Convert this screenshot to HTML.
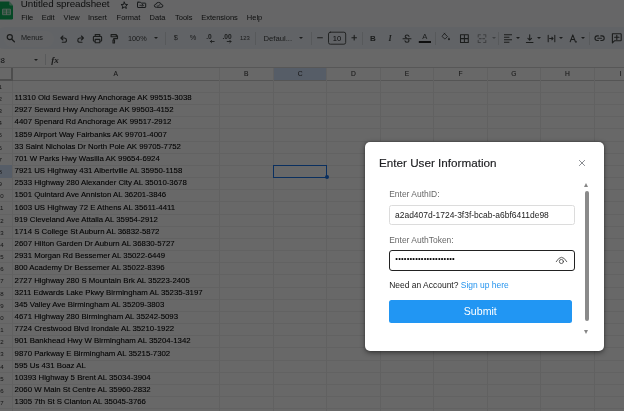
<!DOCTYPE html>
<html><head><meta charset="utf-8"><title>Untitled spreadsheet</title>
<style>
html,body{margin:0;padding:0;background:#fff;}
body{width:624px;height:411px;overflow:hidden;position:relative;font-family:"Liberation Sans",Arial,sans-serif;color:#000;}
#app{position:absolute;left:0;top:0;width:624px;height:411px;overflow:hidden;background:#fff;}
#under{position:absolute;left:0;top:0;width:624px;height:411px;filter:blur(0.35px);}
.abs{position:absolute;}
#head{position:absolute;left:0;top:0;width:624px;height:49px;background:#f9fbfd;}
#tb{position:absolute;left:-6px;top:27.4px;width:640px;height:21.8px;background:#edf2fa;border-radius:11px;}
#menusbox{position:absolute;left:3.5px;top:30.5px;width:50px;height:16px;border-radius:8px;background:#f2f5fb;}
.t{position:absolute;white-space:pre;line-height:1;}
.menu{font-size:7.5px;color:#1f1f1f;top:14.2px;}
.tbt{font-size:7.6px;color:#444746;top:33.6px;}
.sep{position:absolute;top:31.5px;width:1px;height:13px;background:#d6d9df;}
.hl{position:absolute;left:0;width:624px;height:1px;background:#f0f0f0;}
.vl{position:absolute;top:68px;width:1px;height:343px;background:#ededed;}
.cell{position:absolute;left:14.6px;font-size:7.82px;line-height:1;white-space:pre;color:#000;-webkit-text-stroke:0.1px #000;}
.rn{position:absolute;font-size:6.1px;line-height:1;color:#333;width:27px;left:-13.2px;text-align:center;}
.ch{position:absolute;top:71px;font-size:6.7px;line-height:1;color:#3c3c3c;text-align:center;-webkit-text-stroke:0.08px #3c3c3c}
#overlay{position:absolute;left:0;top:0;width:624px;height:411px;background:rgba(0,0,0,0.592);}
#modal{position:absolute;left:365px;top:142.2px;width:239px;height:208.8px;background:#fff;border-radius:5px;box-shadow:0 1.5px 5px rgba(0,0,0,.42), 0 0 2px rgba(0,0,0,.3);}
#mtitle{position:absolute;left:14px;top:14.6px;font-size:11.7px;line-height:1;color:#202124;white-space:pre;-webkit-text-stroke:0.15px #202124;}
.lab{position:absolute;left:24.2px;font-size:8.47px;line-height:1;color:#686868;white-space:pre;}
.mt{filter:blur(0.3px);}
.inp{position:absolute;left:24px;width:185.6px;box-sizing:border-box;border-radius:2.5px;background:#fff;}
</style></head><body>
<div id="app">

<div id="under">
<div id="head"></div>
<svg class="abs" style="left:0;top:0" width="16" height="24" viewBox="0 0 16 24">
<path d="M0 1.6 H9.2 L13 5.4 V18.2 Q13 19.4 11.8 19.4 H0 Z" fill="#11b05c"/>
<path d="M9.2 1.6 L13 5.4 H10 Q9.2 5.4 9.2 4.6 Z" fill="#8fd9b4"/>
<path d="M2.6 9.2 H10.4 V14.7 H2.6 Z M6.5 9.2 V14.7 M2.6 11 H10.4 M2.6 12.9 H10.4" fill="none" stroke="#e6f4ea" stroke-width="0.9"/>
</svg>
<div class="t" style="left:20.8px;top:-0.8px;font-size:9.8px;letter-spacing:-0.06px;color:#1f1f1f">Untitled spreadsheet</div>
<svg class="abs" style="left:112px;top:0" width="60" height="14" viewBox="112 0 60 14" fill="none" stroke="#3c4043" stroke-linejoin="round" stroke-linecap="round">
<path d="M124.30 2.10 L125.21 4.35 L127.63 4.52 L125.77 6.08 L126.36 8.43 L124.30 7.15 L122.24 8.43 L122.83 6.08 L120.97 4.52 L123.39 4.35 Z" stroke-width="1"/>
<path d="M138 2.2 H140.4 L141.3 3.1 H145.2 Q145.7 3.1 145.7 3.6 V7 Q145.7 7.5 145.2 7.5 H138 Q137.5 7.5 137.5 7 V2.7 Q137.5 2.2 138 2.2 Z" stroke-width="1"/>
<path d="M139.8 5.3 H143.2 M142.2 4.2 L143.3 5.3 L142.2 6.4" stroke-width="0.8"/>
<path d="M156.1 7.3 Q154.3 7.3 154.3 5.8 Q154.3 4.5 155.8 4.3 Q156.4 2.4 158.6 2.4 Q160.8 2.4 161.3 4.4 Q162.9 4.6 162.9 5.9 Q162.9 7.3 161.4 7.3 Z" stroke-width="1"/>
<path d="M157 5.6 L157.9 6.4 L160.3 4.2" stroke-width="0.8"/>
</svg>
<div class="t menu" style="left:21.2px">File</div>
<div class="t menu" style="left:41.7px">Edit</div>
<div class="t menu" style="left:63.6px">View</div>
<div class="t menu" style="left:88px">Insert</div>
<div class="t menu" style="left:116.6px">Format</div>
<div class="t menu" style="left:149.6px">Data</div>
<div class="t menu" style="left:175px">Tools</div>
<div class="t menu" style="left:201.2px">Extensions</div>
<div class="t menu" style="left:246.8px">Help</div>
<div id="tb"></div><div id="menusbox"></div>
<svg class="abs" style="left:0;top:27px" width="624" height="22" viewBox="0 27 624 22" fill="none" stroke="#444746" stroke-width="1.12" stroke-linecap="round" stroke-linejoin="round">
<!-- search -->
<circle cx="9.8" cy="37.1" r="2.55" stroke-width="1.2"/><path d="M11.8 39.2 L14.4 41.7" stroke-width="1.3"/>
<!-- undo -->
<g transform="translate(-0.5,2.4)"><path d="M61.6 35.6 H65 Q67 35.8 67 37.8 Q67 39.9 64.8 39.9 H62.8 M63.4 33.6 L61.4 35.6 L63.4 37.6"/></g>
<!-- redo -->
<g transform="translate(0.4,2.4)"><path d="M82.8 35.6 H79.4 Q77.4 35.8 77.4 37.8 Q77.4 39.9 79.6 39.9 H81.6 M81 33.6 L83 35.6 L81 37.6"/></g>
<!-- print -->
<g transform="translate(0,1.2)"><path d="M95.2 35.2 V33.4 H99.8 V35.2 M95.2 40 H94 Q93.4 40 93.4 39.4 V36 Q93.4 35.3 94.1 35.3 H100.9 Q101.6 35.3 101.6 36 V39.4 Q101.6 40 101 40 H99.8 M95.2 38.2 H99.8 V41.6 H95.2 Z"/></g>
<!-- paint format -->
<g transform="translate(-0.3,1.2)"><path d="M111.4 33.4 H116.6 V35.6 H111.4 Z M116.6 34.5 H117.8 V37.4 H114 V38.6 M113.3 38.8 H114.8 V41.8 H113.3 Z"/></g>
<!-- decimals arrows -->
<g transform="translate(0.8,0.2)"><path d="M209.6 41.3 H213.4 M210.8 40.1 L209.6 41.3 L210.8 42.5" stroke-width="0.9"/>
<path d="M226.4 41.3 H230.2 M229 40.1 L230.2 41.3 L229 42.5" stroke-width="0.9"/></g>
<!-- minus plus -->
<path d="M317.6 37.7 H322.4" stroke-width="1.1"/>
<path d="M351.9 37.7 H356.5 M354.2 35.4 V40" stroke-width="1.1"/>
<rect x="328.5" y="32.2" width="17.2" height="12" rx="1.8" stroke-width="0.9"/>
<!-- strikethrough -->
<g transform="translate(0,0.8)"><path d="M403 37.9 H411" stroke-width="1.05"/>
<path d="M409 35.6 Q408.6 34.2 407 34.2 Q405.2 34.2 405.2 35.6 Q405.2 36.6 406.4 36.9 M405 40 Q405.4 41.5 407.1 41.5 Q409 41.5 409 40 Q409 39.3 408.4 38.9" stroke-width="1.05"/></g>
<!-- text color underline -->
<path d="M418.8 42 H431" stroke="#000" stroke-width="1.7" stroke-linecap="butt"/>
<!-- fill -->
<g transform="translate(446,36.6) scale(0.82) translate(-446,-37.2)"><path d="M443.6 33 L447.8 37.2 L445.2 39.8 Q444.6 40.2 444 39.8 L441.6 37.4 Q441.2 36.8 441.6 36.2 L444.8 33" stroke-width="1.1"/>
<path d="M449.6 38.4 Q450.8 40 450.8 40.6 Q450.8 41.6 449.6 41.6 Q448.5 41.6 448.5 40.6 Q448.5 40 449.6 38.4 Z" fill="#444746" stroke="none"/></g>
<!-- borders -->
<g transform="translate(0.1,0.9)"><path d="M460.4 33.8 H468.2 V41.6 H460.4 Z M464.3 33.8 V41.6 M460.4 37.7 H468.2" stroke-width="1.05" stroke-linecap="butt"/></g>
<!-- merge (disabled) -->
<g stroke="#9a9da1" stroke-width="1.05" transform="translate(-0.2,0.9)"><path d="M478.4 36 V33.8 H480.6 M483.8 33.8 H486 V36 M486 39.4 V41.6 H483.8 M480.6 41.6 H478.4 V39.4 M479.6 37.7 H481.4 M483 37.7 H484.8"/></g>
<!-- halign -->
<g transform="translate(0,0.9)"><path d="M504 33.9 H512 M504 36.4 H509.4 M504 38.9 H512 M504 41.4 H509.4" stroke-width="1.12" stroke-linecap="butt"/></g>
<!-- valign -->
<g transform="translate(0,0.9)"><path d="M529.7 33.8 V39 M527.9 37.4 L529.7 39.2 L531.5 37.4 M526.4 41.6 H533" stroke-width="1.05"/></g>
<!-- wrap -->
<g transform="translate(0,0.7)"><path d="M548.2 34.6 V41 M554.8 34.6 V41 M549.6 37.8 H553 M551.8 36.5 L553.1 37.8 L551.8 39.1" stroke-width="1.05"/></g>
<!-- rotate -->
<g transform="translate(-0.2,0.7)"><path d="M570.4 41 L573 34.2 L575.6 41 M571.3 38.8 H574.7" stroke-width="1.05"/>
<path d="M575.2 41.8 L577 41.8 L577 40 Z" fill="#444746" stroke="none"/></g>
<!-- link -->
<g transform="translate(0,0.5)"><path d="M598.4 35.4 H597.2 Q595 35.6 595 37.7 Q595 39.8 597.2 40 H598.4 M600.8 35.4 H602 Q604.2 35.6 604.2 37.7 Q604.2 39.8 602 40 H600.8 M597.8 37.7 H601.4" stroke-width="1.12"/></g>
<!-- comment -->
<g transform="translate(0,0.2)"><path d="M612.4 33.6 H620.6 Q621.2 33.6 621.2 34.2 V40 Q621.2 40.6 620.6 40.6 H614.4 L612.4 42.6 Z M614.6 37.1 H619 M616.8 35 V39.2" stroke-width="1.12"/></g>
</svg>
<div class="t tbt" style="left:21px;font-size:7.3px;top:33.7px">Menus</div>
<div class="t tbt" style="left:128px;font-size:7.3px;top:34.8px">100%</div>
<div class="t tbt" style="left:173.8px;font-size:7.4px;top:34.0px">$</div>
<div class="t tbt" style="left:189.8px;font-size:7.4px;top:34.0px">%</div>
<div class="t tbt" style="left:206.2px;font-size:6.6px;top:33.8px;font-weight:bold">.0</div>
<div class="t tbt" style="left:222.4px;font-size:6.6px;top:33.8px;font-weight:bold">.00</div>
<div class="t tbt" style="left:240px;font-size:5.9px;top:36px">123</div>
<div class="t tbt" style="left:263.5px;font-size:7.7px;top:34.8px">Defaul...</div>
<div class="t tbt" style="left:332.8px;font-size:7.6px;top:34.8px;color:#222">10</div>
<div class="t tbt" style="left:370px;font-size:8px;top:34.8px;font-weight:bold">B</div>
<div class="t tbt" style="left:388.6px;font-size:8px;top:34.8px;font-style:italic;font-weight:bold;font-family:'Liberation Serif',serif">I</div>
<div class="t tbt" style="left:422.2px;font-size:7.6px;top:33.2px">A</div>
<div class="abs" style="left:154.3px;top:36.8px;width:0;height:0;border-left:2px solid transparent;border-right:2px solid transparent;border-top:2.2px solid #444746"></div>
<div class="abs" style="left:299.2px;top:36.8px;width:0;height:0;border-left:2px solid transparent;border-right:2px solid transparent;border-top:2.2px solid #444746"></div>
<div class="abs" style="left:515.5px;top:36.8px;width:0;height:0;border-left:2px solid transparent;border-right:2px solid transparent;border-top:2.2px solid #444746"></div>
<div class="abs" style="left:537.3px;top:36.8px;width:0;height:0;border-left:2px solid transparent;border-right:2px solid transparent;border-top:2.2px solid #444746"></div>
<div class="abs" style="left:559.1px;top:36.8px;width:0;height:0;border-left:2px solid transparent;border-right:2px solid transparent;border-top:2.2px solid #444746"></div>
<div class="abs" style="left:580.7px;top:36.8px;width:0;height:0;border-left:2px solid transparent;border-right:2px solid transparent;border-top:2.2px solid #444746"></div>
<div class="abs" style="left:491.8px;top:36.8px;width:0;height:0;border-left:2px solid transparent;border-right:2px solid transparent;border-top:2.2px solid #9a9da1"></div>
<div class="sep" style="left:164.8px"></div>
<div class="sep" style="left:255.0px"></div>
<div class="sep" style="left:311.2px"></div>
<div class="sep" style="left:362.3px"></div>
<div class="sep" style="left:435.2px"></div>
<div class="sep" style="left:498.3px"></div>
<div class="sep" style="left:589.0px"></div>
<div class="abs" style="left:0;top:49px;width:624px;height:19px;background:#fff"></div>
<div class="t" style="left:-4.6px;top:57px;font-size:7.4px;color:#202124">C8</div>
<div class="abs" style="left:34px;top:58.6px;width:0;height:0;border-left:2.2px solid transparent;border-right:2.2px solid transparent;border-top:2.4px solid #444746"></div>
<div class="abs" style="left:44.6px;top:54px;width:1px;height:11px;background:#dadce0"></div>
<div class="t" style="left:51.2px;top:56.2px;font-size:9px;color:#444;font-weight:bold;font-style:italic;font-family:'Liberation Serif',serif">fx</div>
<div class="abs" style="left:0;top:67.6px;width:624px;height:343.4px;background:#fff"></div>
<div class="abs" style="left:273.4px;top:68px;width:53.4px;height:12.4px;background:#d3e3fd"></div>
<div class="hl" style="top:67.4px;background:#d5d5d5"></div>
<div class="hl" style="top:79.8px;background:#d0d0d0"></div>
<div class="hl" style="top:91.96px"></div>
<div class="hl" style="top:104.13px"></div>
<div class="hl" style="top:116.29px"></div>
<div class="hl" style="top:128.46px"></div>
<div class="hl" style="top:140.62px"></div>
<div class="hl" style="top:152.78px"></div>
<div class="hl" style="top:164.95px"></div>
<div class="hl" style="top:177.11px"></div>
<div class="hl" style="top:189.28px"></div>
<div class="hl" style="top:201.44px"></div>
<div class="hl" style="top:213.60px"></div>
<div class="hl" style="top:225.77px"></div>
<div class="hl" style="top:237.93px"></div>
<div class="hl" style="top:250.10px"></div>
<div class="hl" style="top:262.26px"></div>
<div class="hl" style="top:274.42px"></div>
<div class="hl" style="top:286.59px"></div>
<div class="hl" style="top:298.75px"></div>
<div class="hl" style="top:310.92px"></div>
<div class="hl" style="top:323.08px"></div>
<div class="hl" style="top:335.24px"></div>
<div class="hl" style="top:347.41px"></div>
<div class="hl" style="top:359.57px"></div>
<div class="hl" style="top:371.74px"></div>
<div class="hl" style="top:383.90px"></div>
<div class="hl" style="top:396.06px"></div>
<div class="hl" style="top:408.23px"></div>
<div class="vl" style="left:11.80px"></div>
<div class="vl" style="left:218.80px"></div>
<div class="vl" style="left:272.90px"></div>
<div class="vl" style="left:326.30px"></div>
<div class="vl" style="left:379.70px"></div>
<div class="vl" style="left:433.20px"></div>
<div class="vl" style="left:486.70px"></div>
<div class="vl" style="left:540.10px"></div>
<div class="vl" style="left:593.60px"></div>
<div class="abs" style="left:0;top:165.45px;width:12.3px;height:12.16px;background:#d3e3fd"></div>
<div class="abs" style="left:10.8px;top:68px;width:1.8px;height:12.6px;background:#bcbcbc"></div>
<div class="abs" style="left:0;top:79.4px;width:12.4px;height:1.6px;background:#bcbcbc"></div>
<div class="ch" style="left:12.3px;width:207.0px">A</div>
<div class="ch" style="left:219.3px;width:54.1px">B</div>
<div class="ch" style="left:273.4px;width:53.4px">C</div>
<div class="ch" style="left:326.8px;width:53.4px">D</div>
<div class="ch" style="left:380.2px;width:53.5px">E</div>
<div class="ch" style="left:433.7px;width:53.5px">F</div>
<div class="ch" style="left:487.2px;width:53.4px">G</div>
<div class="ch" style="left:540.6px;width:53.5px">H</div>
<div class="ch" style="left:594.1px;width:53.4px">I</div>
<div class="rn" style="top:83.84px">1</div>
<div class="rn" style="top:95.84px">2</div>
<div class="rn" style="top:107.84px">3</div>
<div class="rn" style="top:119.84px">4</div>
<div class="rn" style="top:131.84px">5</div>
<div class="rn" style="top:144.84px">6</div>
<div class="rn" style="top:156.84px">7</div>
<div class="rn" style="top:168.84px">8</div>
<div class="rn" style="top:180.84px">9</div>
<div class="rn" style="top:192.84px">10</div>
<div class="rn" style="top:204.84px">11</div>
<div class="rn" style="top:217.84px">12</div>
<div class="rn" style="top:229.84px">13</div>
<div class="rn" style="top:241.84px">14</div>
<div class="rn" style="top:253.84px">15</div>
<div class="rn" style="top:265.84px">16</div>
<div class="rn" style="top:277.84px">17</div>
<div class="rn" style="top:290.84px">18</div>
<div class="rn" style="top:302.84px">19</div>
<div class="rn" style="top:314.84px">20</div>
<div class="rn" style="top:326.84px">21</div>
<div class="rn" style="top:338.84px">22</div>
<div class="rn" style="top:350.84px">23</div>
<div class="rn" style="top:363.84px">24</div>
<div class="rn" style="top:375.84px">25</div>
<div class="rn" style="top:387.84px">26</div>
<div class="rn" style="top:399.84px">27</div>
<div class="cell" style="top:94.38px">11310 Old Seward Hwy Anchorage AK 99515-3038</div>
<div class="cell" style="top:106.38px">2927 Seward Hwy Anchorage AK 99503-4152</div>
<div class="cell" style="top:118.38px">4407 Spenard Rd Anchorage AK 99517-2912</div>
<div class="cell" style="top:131.38px">1859 Airport Way Fairbanks AK 99701-4007</div>
<div class="cell" style="top:143.38px">33 Saint Nicholas Dr North Pole AK 99705-7752</div>
<div class="cell" style="top:155.38px">701 W Parks Hwy Wasilla AK 99654-6924</div>
<div class="cell" style="top:167.38px">7921 US Highway 431 Albertville AL 35950-1158</div>
<div class="cell" style="top:179.38px">2533 Highway 280 Alexander City AL 35010-3678</div>
<div class="cell" style="top:191.38px">1501 Quintard Ave Anniston AL 36201-3846</div>
<div class="cell" style="top:204.38px">1603 US Highway 72 E Athens AL 35611-4411</div>
<div class="cell" style="top:216.38px">919 Cleveland Ave Attalla AL 35954-2912</div>
<div class="cell" style="top:228.38px">1714 S College St Auburn AL 36832-5872</div>
<div class="cell" style="top:240.38px">2607 Hilton Garden Dr Auburn AL 36830-5727</div>
<div class="cell" style="top:252.38px">2931 Morgan Rd Bessemer AL 35022-6449</div>
<div class="cell" style="top:264.38px">800 Academy Dr Bessemer AL 35022-8396</div>
<div class="cell" style="top:277.38px">2727 Highway 280 S Mountain Brk AL 35223-2405</div>
<div class="cell" style="top:289.38px">3211 Edwards Lake Pkwy Birmingham AL 35235-3197</div>
<div class="cell" style="top:301.38px">345 Valley Ave Birmingham AL 35209-3803</div>
<div class="cell" style="top:313.38px">4671 Highway 280 Birmingham AL 35242-5093</div>
<div class="cell" style="top:325.38px">7724 Crestwood Blvd Irondale AL 35210-1922</div>
<div class="cell" style="top:337.38px">901 Bankhead Hwy W Birmingham AL 35204-1342</div>
<div class="cell" style="top:350.38px">9870 Parkway E Birmingham AL 35215-7302</div>
<div class="cell" style="top:362.38px">595 Us 431 Boaz AL</div>
<div class="cell" style="top:374.38px">10393 Highway 5 Brent AL 35034-3904</div>
<div class="cell" style="top:386.38px">2060 W Main St Centre AL 35960-2832</div>
<div class="cell" style="top:398.38px">1305 7th St S Clanton AL 35045-3766</div>
<div class="abs" style="left:272.7px;top:164.6px;width:54.6px;height:13.2px;border:1.2px solid #1a73e8;box-sizing:border-box"></div>
<div class="abs" style="left:324.9px;top:175.3px;width:4px;height:4px;border-radius:50%;background:#1a73e8"></div>
</div>
<div id="overlay"></div>
<div id="modal">
<div class="mt" id="mtitle">Enter User Information</div>
<svg class="abs" style="left:213px;top:16.4px" width="8" height="8" viewBox="0 0 8 8"><path d="M1.1 1.1 L6.9 6.9 M6.9 1.1 L1.1 6.9" stroke="#75797e" stroke-width="0.85" fill="none"/></svg>
<div class="lab mt" style="top:48px">Enter AuthID:</div>
<div class="inp" style="top:62.8px;height:20px;border:1px solid #dcdcdc"></div>
<div class="t mt" style="left:30px;top:68.5px;font-size:8.47px;color:#222">a2ad407d-1724-3f3f-bcab-a6bf6411de98</div>
<div class="lab mt" style="top:93.6px">Enter AuthToken:</div>
<div class="inp" style="top:107.6px;height:21.5px;border:1.1px solid #222;border-radius:3px"></div>
<div class="t mt" style="left:30.3px;top:113.3px;font-size:7.6px;letter-spacing:0.18px;color:#000">•••••••••••••••••••••</div>
<svg class="abs" style="left:185px;top:107.8px" width="24" height="21" viewBox="550 250 24 21" fill="none" stroke="#444" stroke-width="0.85" stroke-linecap="round"><path d="M556.2 261.7 Q561.5 252.6 566.8 261.7"/><circle cx="561.4" cy="261.5" r="2.05"/></svg>
<div class="t mt" style="left:24.2px;top:138.8px;font-size:8.47px;color:#222">Need an Account? <span style="color:#2594ee">Sign up here</span></div>
<div class="abs" style="left:24px;top:157.6px;width:182.6px;height:23.1px;background:#2196f3;border-radius:2.5px"></div>
<div class="t mt" style="left:24px;width:182.6px;text-align:center;top:163.4px;font-size:10.6px;color:#fff">Submit</div>
<div class="abs" style="left:219.5px;top:49.3px;width:4.4px;height:129.9px;background:#8a8a8a;border-radius:2.2px"></div>
<div class="abs" style="left:218.9px;top:40.6px;width:0;height:0;border-left:2.8px solid transparent;border-right:2.8px solid transparent;border-bottom:4px solid #858585"></div>
<div class="abs" style="left:219.1px;top:187.5px;width:0;height:0;border-left:2.8px solid transparent;border-right:2.8px solid transparent;border-top:4px solid #858585"></div>
</div>
</div></body></html>
